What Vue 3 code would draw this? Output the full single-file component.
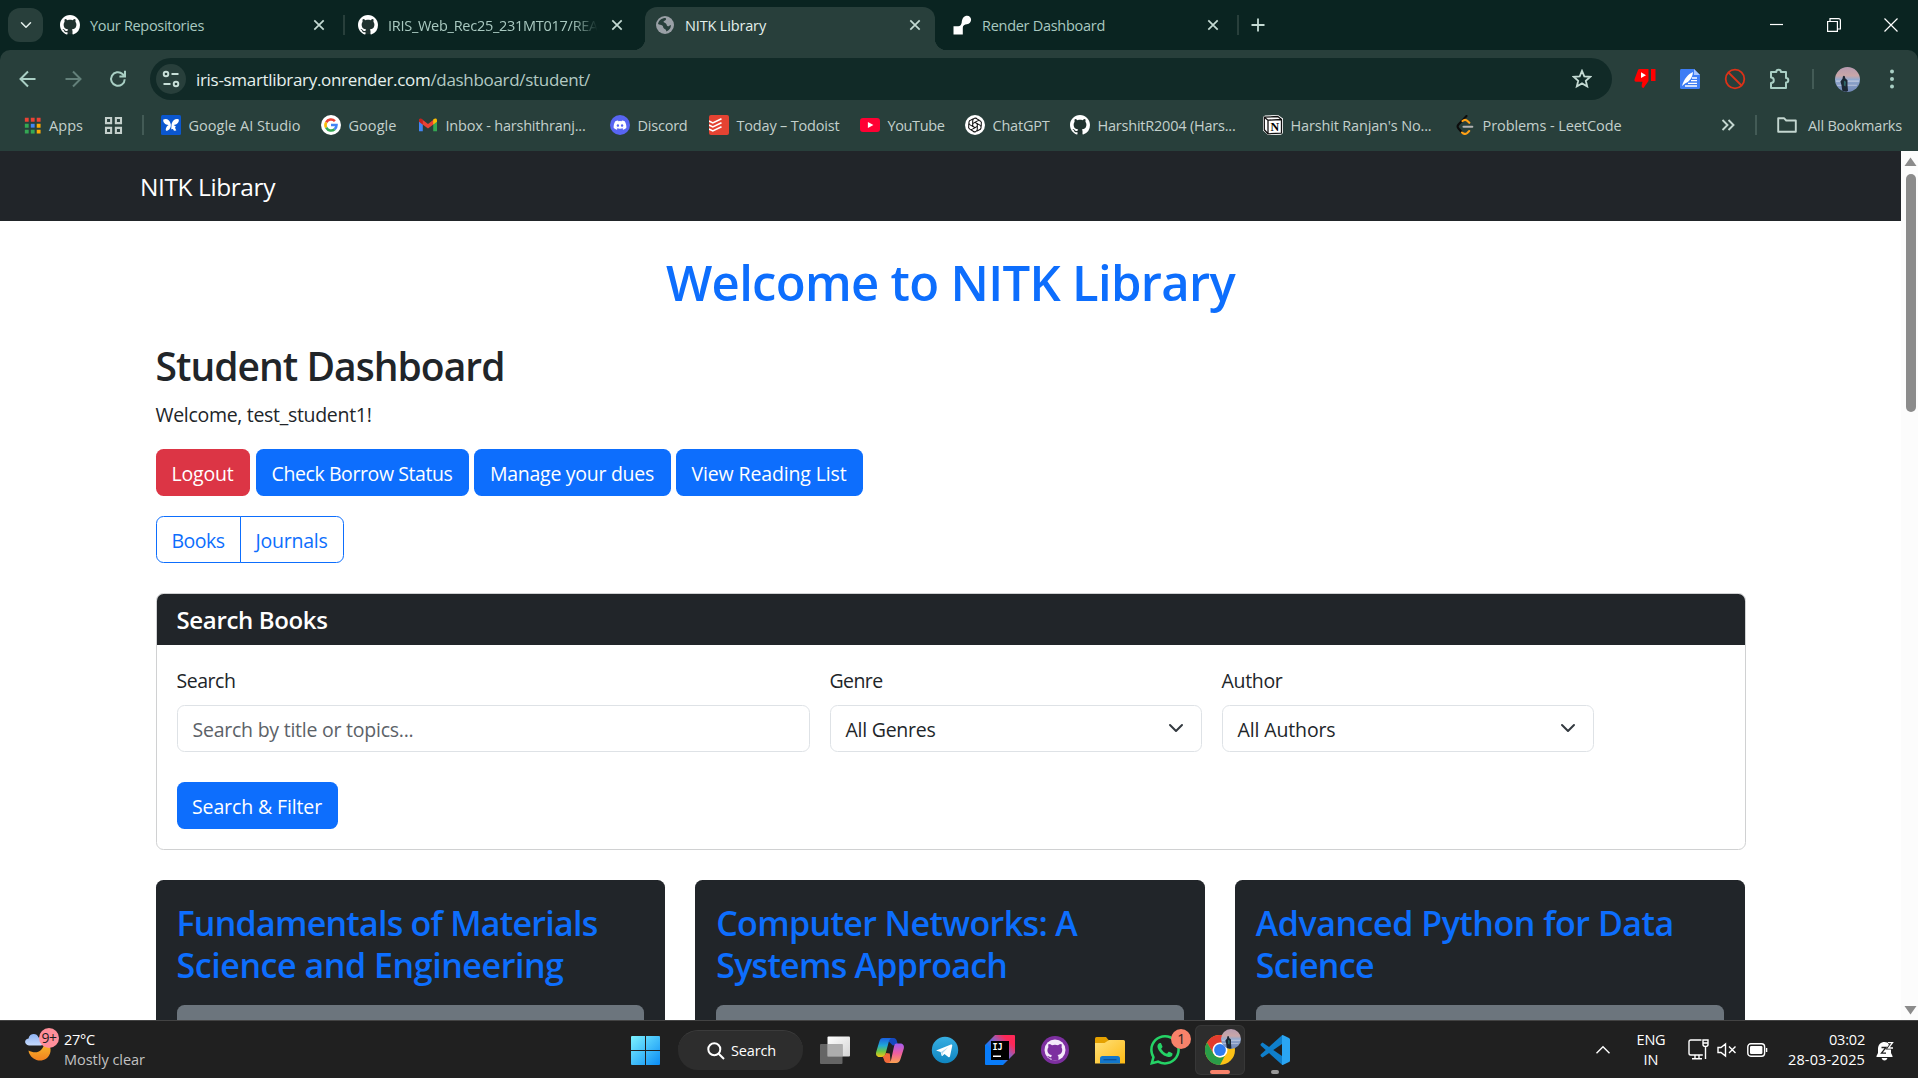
<script setup>
const tabs = [
  { icon: 'github', title: 'Your Repositories', fit: 114, sep: true },
  { icon: 'github', title: 'IRIS_Web_Rec25_231MT017/REA', fit: 210, fade: true },
  { icon: 'globe', title: 'NITK Library', fit: 81, active: true },
  { icon: 'render', title: 'Render Dashboard', fit: 123, sep: true },
]

// slot: distance from one bookmark's icon to the next one's
const bookmarks = [
  { icon: 'aistudio', title: 'Google AI Studio', fit: 112, slot: 160 },
  { icon: 'google', title: 'Google', fit: 48, slot: 97 },
  { icon: 'gmail', title: 'Inbox - harshithranj...', fit: 140, slot: 192 },
  { icon: 'discord', title: 'Discord', fit: 50, slot: 99 },
  { icon: 'todoist', title: 'Today – Todoist', fit: 103, slot: 151 },
  { icon: 'youtube', title: 'YouTube', fit: 57, slot: 105 },
  { icon: 'openai', title: 'ChatGPT', fit: 57, slot: 105 },
  { icon: 'github', title: 'HarshitR2004 (Hars...', fit: 138, slot: 193 },
  { icon: 'notion', title: "Harshit Ranjan's No...", fit: 141, slot: 192 },
  { icon: 'leetcode', title: 'Problems - LeetCode', fit: 139, slot: 180 },
]

const actions = [
  { label: 'Logout', width: 94, fit: 62, danger: true },
  { label: 'Check Borrow Status', width: 213, fit: 181 },
  { label: 'Manage your dues', width: 197, fit: 164 },
  { label: 'View Reading List', width: 187, fit: 155 },
]

const books = [
  [['Fundamentals of Materials', 421], ['Science and Engineering', 387]],
  [['Computer Networks: A', 361], ['Systems Approach', 291]],
  [['Advanced Python for Data', 418], ['Science', 118]],
]

// Tracks the text so that it fills the given width in pixels.
const vFit = {
  mounted(el, { value }) {
    const range = document.createRange()
    range.selectNodeContents(el)
    const natural = range.getBoundingClientRect().width
    el.style.letterSpacing = (value - natural) / el.textContent.length + 'px'
  },
}
</script>

<template>
  <svg class="defs" aria-hidden="true">
    <defs>
      <linearGradient id="gWin" x1="0" y1="0" x2="1" y2="1"><stop offset="0" stop-color="#7df3ff" /><stop offset="1" stop-color="#0a8cf5" /></linearGradient>
      <linearGradient id="gMoon" x1="0" y1="0" x2="0" y2="1"><stop offset="0" stop-color="#f9c22e" /><stop offset="1" stop-color="#f0801f" /></linearGradient>
      <linearGradient id="gCloud" x1="0" y1="0" x2="0" y2="1"><stop offset="0" stop-color="#8fb4f4" /><stop offset="1" stop-color="#c5d9fb" /></linearGradient>
      <linearGradient id="gCop1" x1="0" y1="0" x2="0" y2="1"><stop offset="0" stop-color="#1a5fe0" /><stop offset=".4" stop-color="#20a8d8" /><stop offset=".7" stop-color="#6cc644" /><stop offset="1" stop-color="#f8c512" /></linearGradient>
      <linearGradient id="gCop2" x1="0" y1="0" x2="0" y2="1"><stop offset="0" stop-color="#a45cf0" /><stop offset=".5" stop-color="#ee5fa0" /><stop offset="1" stop-color="#fba250" /></linearGradient>
      <linearGradient id="gTg" x1="0" y1="0" x2="0" y2="1"><stop offset="0" stop-color="#37aee2" /><stop offset="1" stop-color="#0f85c0" /></linearGradient>
      <linearGradient id="gIj" x1="0" y1="1" x2="1" y2="0"><stop offset=".35" stop-color="#087cfa" /><stop offset=".6" stop-color="#9b5bb5" /><stop offset=".8" stop-color="#fe2857" /></linearGradient>
      <linearGradient id="gFolder" x1="0" y1="0" x2="1" y2="1"><stop offset="0" stop-color="#ffe17a" /><stop offset="1" stop-color="#fdb913" /></linearGradient>
      <linearGradient id="gTask" x1="0" y1="0" x2="1" y2="1"><stop offset="0" stop-color="#fff" /><stop offset="1" stop-color="#d4d4d4" /></linearGradient>
      <linearGradient id="gSky" x1="0" y1="0" x2="0" y2="1"><stop offset="0" stop-color="#b79bb0" /><stop offset=".35" stop-color="#c9a6a8" /><stop offset=".5" stop-color="#93a9cf" /><stop offset="1" stop-color="#6f86b4" /></linearGradient>
    </defs>

    <symbol id="github" viewBox="0 0 16 16"><circle cx="8" cy="8" r="7.4" fill="#20322f" /><path fill="#fff" d="M8 0C3.58 0 0 3.58 0 8c0 3.54 2.29 6.53 5.47 7.59.4.07.55-.17.55-.38 0-.19-.01-.82-.01-1.49-2.01.37-2.53-.49-2.69-.94-.09-.23-.48-.94-.82-1.13-.28-.15-.68-.52-.01-.53.63-.01 1.08.58 1.23.82.72 1.21 1.87.87 2.33.66.07-.52.28-.87.51-1.07-1.78-.2-3.64-.89-3.64-3.95 0-.87.31-1.59.82-2.15-.08-.2-.36-1.02.08-2.12 0 0 .67-.21 2.2.82.64-.18 1.32-.27 2-.27s1.36.09 2 .27c1.53-1.04 2.2-.82 2.2-.82.44 1.1.16 1.92.08 2.12.51.56.82 1.27.82 2.15 0 3.07-1.87 3.75-3.65 3.95.29.25.54.73.54 1.48 0 1.07-.01 1.93-.01 2.2 0 .21.15.46.55.38A8.01 8.01 0 0 0 16 8c0-4.42-3.58-8-8-8Z" /></symbol>
    <symbol id="globe" viewBox="0 0 20 20"><circle cx="10" cy="10" r="9" fill="#9aa0a6" /><path fill="#283f3b" d="M8.500 3.200c2.200-.3 3 .3 2.400 1.500-.5 1-2.100.8-2.300 1.900-.2 1.200 1.400 1 2.300 1.900 1.200 1.100.4 2.300 1.900 2.700 1.400.4 1.500-1 3-1.300.3 3-1.800 5.600-4.600 6.500.3-1.400-.7-2-1.900-2.700-1.500-.9-.7-2.200-2-3.200C6 9.500 4.600 9.800 3 9c.3-3 2.600-5.400 5.500-5.800z" /></symbol>
    <symbol id="render" viewBox="0 0 20 20"><path fill="#fff" d="M1.500 19.500v-8.300h4.700c2 0 3.200-1.600 3.500-3.700C10 3.500 12 .8 15.200.8c2.300 0 3.900 1.800 3.900 4s-1.700 4.400-4.200 4.400c-2.300 0-4.100 1.200-4.100 3.600v6.700z" /></symbol>
    <symbol id="apps" viewBox="0 0 20 20">
      <path fill="#ea4335" d="M1 1h4.500v4.500H1zM8 1h4.500v4.500H8zM15 1h4.500v4.500H15z" /><path fill="#34a853" d="M1 8h4.500v4.500H1zM1 15h4.500v4.500H1z" /><path fill="#4285f4" d="M8 8h4.500v4.500H8z" /><path fill="#34a853" d="M8 15h4.500v4.500H8z" /><path fill="#fbab05" d="M15 8h4.500v4.500H15zM15 15h4.500v4.500H15z" />
    </symbol>
    <symbol id="grid" viewBox="0 0 20 20"><path fill="none" stroke="#c3cfcb" stroke-width="2.200" d="M2.100 2.100h5.400v5.400H2.100zM12.500 2.100h5.400v5.400h-5.400zM2.100 12.500h5.400v5.400H2.100zM12.500 12.500h5.400v5.400h-5.400z" /></symbol>
    <symbol id="aistudio" viewBox="0 0 20 20"><rect width="20" height="20" rx="1.500" fill="#0b57d0" /><path fill="#fff" d="M9.800 9.200C8.500 4.500 5.500 3.300 2.300 4.600 1.800 7.800 4.500 10 7.600 9.900 5 11.500 4.300 14 5 15.800 8 16 9.600 13 9.800 11zM10.600 9C12 4.500 14.800 3.300 17.800 4.600 18.200 7.800 15.600 10 12.600 9.900l2.300 1.600-.9 1.300 1.300 2.600-2.300.4-1.100-1.800-1.700.2z" /></symbol>
    <symbol id="google" viewBox="0 0 20 20"><circle cx="10" cy="10" r="10" fill="#fff" /><g fill="none" stroke-width="2.600"><path stroke="#ea4335" d="M5.200 7.300A5.500 5.500 0 0 1 13.900 6.100" /><path stroke="#fbbc05" d="M5.200 12.700a5.500 5.500 0 0 1 0-5.400" /><path stroke="#34a853" d="M13.600 14.200a5.500 5.500 0 0 1-8.400-1.500" /><path stroke="#4285f4" d="M10 10h5.500a5.500 5.500 0 0 1-1.900 4.200" /></g></symbol>
    <symbol id="gmail" viewBox="0 0 20 20"><path fill="#4285f4" d="M1 6v10.200h3.800V9z" /><path fill="#34a853" d="M19 6v10.200h-3.800V9z" /><path fill="#ea4335" d="M1.200 4.200 4.800 5 10 9l5.200-4 3 .2L17 8.300l-7 5.200-7-5.200z" /><path fill="#c5221f" d="M1 5.200C1 3.300 3 3 4.800 4.500V9.500L1 6.700z" /><path fill="#fbbc04" d="M19 5.200c0-1.900-2-2.200-3.800-.7v5L19 6.700z" /></symbol>
    <symbol id="discord" viewBox="0 0 20 20"><circle cx="10" cy="10" r="10" fill="#5865f2" /><path fill="#fff" d="M14.700 6.200A10 10 0 0 0 12 5.400l-.4.8a9 9 0 0 0-3.200 0L8 5.400a10 10 0 0 0-2.700.8C3.800 8.500 3.500 10.800 3.700 13.100a9 9 0 0 0 3.200 1.600l.7-1.200-1-.5.2-.2a6.600 6.600 0 0 0 6.400 0l.2.200-1 .5.7 1.200a9 9 0 0 0 3.200-1.600c.3-2.700-.4-5-1.600-6.900zM7.900 11.800c-.7 0-1.200-.6-1.200-1.300s.5-1.300 1.200-1.300 1.200.6 1.200 1.300-.5 1.300-1.200 1.300zm4.200 0c-.7 0-1.200-.6-1.200-1.300s.5-1.300 1.200-1.300 1.200.6 1.200 1.300-.5 1.300-1.200 1.300z" /></symbol>
    <symbol id="todoist" viewBox="0 0 20 20"><rect width="20" height="20" rx="2" fill="#e44332" /><path fill="none" stroke="#fff" stroke-width="1.600" d="M0 6l3.800 1.900L12.500 3.700M0 10l3.800 1.900 8.700-4.200M0 14l3.800 1.900 8.700-4.200" /></symbol>
    <symbol id="youtube" viewBox="0 0 20 20"><rect y="3" width="20" height="14" rx="3" fill="#ff0033" /><path fill="#fff" d="m7.900 7 5.500 3-5.500 3z" /></symbol>
    <symbol id="openai" viewBox="0 0 20 20"><circle cx="10" cy="10" r="10" fill="#fff" /><g fill="none" stroke="#111" stroke-width="1.050"><path d="M10 7.400 7.700 8.700v-3a2.600 2.600 0 0 1 4.600-1.600l2 1.200" /><path transform="rotate(60 10 10)" d="M10 7.400 7.700 8.700v-3a2.600 2.600 0 0 1 4.600-1.600l2 1.200" /><path transform="rotate(120 10 10)" d="M10 7.400 7.700 8.700v-3a2.600 2.600 0 0 1 4.600-1.600l2 1.200" /><path transform="rotate(180 10 10)" d="M10 7.400 7.700 8.700v-3a2.600 2.600 0 0 1 4.600-1.600l2 1.200" /><path transform="rotate(240 10 10)" d="M10 7.400 7.700 8.700v-3a2.600 2.600 0 0 1 4.600-1.600l2 1.200" /><path transform="rotate(300 10 10)" d="M10 7.400 7.700 8.700v-3a2.600 2.600 0 0 1 4.600-1.600l2 1.200" /></g></symbol>
    <symbol id="leetcode" viewBox="0 0 20 20"><g fill="none" stroke-linecap="round" stroke-width="2.100"><path stroke="#0c0c0c" d="M11.500 1 3.500 9.500a3 3 0 0 0 0 4L7 17.500" /><path stroke="#ffa116" d="m7 17.500c1.700 1.700 4 1.600 5.500.2l1.700-1.700M7.500 6c1.700-1.500 3.500-1.600 5 0l1.800 1.800" /><path stroke="#b3b3b3" d="M8.500 11.800h8.800" /></g></symbol>
    <symbol id="folder" viewBox="0 0 20 20"><path fill="none" stroke="#c3d6d0" stroke-width="1.900" stroke-linejoin="round" d="M1.200 3.300h6l2 2.200h9.600v11.300H1.200z" /></symbol>
    <symbol id="cross" viewBox="0 0 12 12"><path fill="none" stroke="currentColor" stroke-width="1.700" d="m1.300 1.300 9.400 9.400M10.700 1.300l-9.400 9.400" /></symbol>
    <symbol id="avatar" viewBox="0 0 24 24"><circle cx="12" cy="12" r="12" fill="url(#gSky)" /><path fill="#dfe3ee" opacity=".6" d="M1 13h22v1.200H1zM2 17h19v1H2z" /><path fill="#1c2733" d="M7.600 9q.9-1.300 1.900 0l.3 1.700 2.200 2v4.500l.5 5.800-1.800.8-3.700-1-.8-5.500-1-3.500 2-2.500z" /><path fill="#2f6668" d="m8.500 13 2 1.200-.4 4.500-1.600-1z" /></symbol>
    <symbol id="chevron" viewBox="0 0 16 16"><path fill="none" stroke="currentColor" stroke-width="2" stroke-linecap="round" stroke-linejoin="round" d="m2 5 6 6 6-6" /></symbol>
  </svg>

  <div class="screen">
    <header class="browser">
      <div class="tabstrip">
        <button class="tab-search"><svg width="12" height="12"><use href="#chevron" /></svg></button>
        <div v-for="tab in tabs" :key="tab.title" class="tab" :class="{ active: tab.active, sep: tab.sep }">
          <svg class="tab-icon" width="20" height="20"><use :href="'#' + tab.icon" /></svg>
          <span class="tab-title" :class="{ fade: tab.fade }"><span v-fit="tab.fit">{{ tab.title }}</span></span>
          <svg class="tab-close" width="12" height="12"><use href="#cross" /></svg>
        </div>
        <svg class="new-tab" width="14" height="14" viewBox="0 0 14 14"><path d="M7 .5v13M.5 7h13" /></svg>
        <div class="window-controls">
          <svg width="14" height="14" viewBox="0 0 14 14"><path d="M0 6.500h13" /></svg>
          <svg width="14" height="14" viewBox="0 0 14 14"><path d="M.6 3.500h9.800v9.800H.6zM3 3.500V.6h8.500q1.900 0 1.900 1.900v8.500h-3" /></svg>
          <svg width="14" height="14" viewBox="0 0 14 14"><path d="m.5.5 13 13M13.500.5l-13 13" /></svg>
        </div>
      </div>

      <div class="toolbar">
        <svg class="nav-icon" width="20" height="20" viewBox="0 0 20 20"><path d="M17.500 10H3M10 2.500 2.500 10l7.500 7.500" /></svg>
        <svg class="nav-icon off" width="20" height="20" viewBox="0 0 20 20"><path d="M2.500 10H17M10 2.500l7.500 7.500-7.500 7.500" /></svg>
        <svg class="nav-icon" width="20" height="20" viewBox="0 0 20 20"><path d="M16.700 10.200A6.800 6.800 0 1 1 14.500 5l2.300 2.200M17 1.800v5.600h-5.600" /></svg>
        <div class="omnibox">
          <span class="site-info"><svg width="18" height="18" viewBox="0 0 18 18"><path d="M9.500 4h7M1.500 14h7" /><circle cx="4" cy="4" r="2.300" /><circle cx="14" cy="14" r="2.300" /></svg></span>
          <span v-fit="394" class="url">iris-smartlibrary.onrender.com<i>/dashboard/student/</i></span>
          <svg class="star" width="20" height="20" viewBox="0 0 20 20"><path d="m10 1.800 2.300 5.500 6 .5-4.500 3.900 1.400 5.800L10 14.400l-5.200 3.100 1.400-5.800L1.700 7.800l6-.5z" /></svg>
        </div>
        <div class="extensions">
          <svg width="22" height="20" viewBox="0 0 22 20"><path fill="#f00" d="M5.500 0h9v12l-5 7c-2.500-.5-2-2.500-1-6.200H2.200C.3 12.800.2 11 .8 9.500L4 1q.4-1 1.500-1zM17 0h4.500v12H17z" /><path fill="#fff" d="m7 3.300 5 2.900-5 2.900z" /></svg>
          <svg width="22" height="20" viewBox="0 0 22 20"><path fill="#3d7df5" d="M2 0h13l6 6v12.500q0 1.500-1.500 1.500h-17Q1 20 1 18.500V1.500Q1 0 2 0z" /><path fill="#a9c7ff" d="m15 0 6 6h-6z" /><path fill="#fff" d="M3 17C5 10 9 5 14 3c-.5 6-4 10-8 11.500z" /><path fill="none" stroke="#fff" stroke-width="1.300" d="M13 9h5M12 11.700h6M9 14.400h9M6 17h12" /></svg>
          <svg width="22" height="22" viewBox="0 0 22 22"><g fill="none" stroke="#dc3218" stroke-width="1.800"><circle cx="11" cy="11" r="9.300" /><path d="m4.500 4.500 13 13" /></g></svg>
          <svg width="22" height="22" viewBox="0 0 22 22"><path fill="none" stroke="#a9cfc4" stroke-width="2" stroke-linejoin="round" d="M2 4h5.300a2.300 2.300 0 0 1 4.600 0H17v6a2.300 2.300 0 0 1 0 4.600V20H2v-5a2.700 2.700 0 0 0 0-5.600z" /></svg>
          <span class="bar"></span>
          <svg width="25" height="25"><use href="#avatar" /></svg>
          <svg class="dots" width="6" height="20" viewBox="0 0 6 20"><circle cx="3" cy="2.500" r="2" /><circle cx="3" cy="10" r="2" /><circle cx="3" cy="17.500" r="2" /></svg>
        </div>
      </div>

      <div class="bookmarks">
        <svg width="17" height="17"><use href="#apps" /></svg>
        <span v-fit="34" class="apps-label">Apps</span>
        <svg class="grid-icon" width="19" height="19"><use href="#grid" /></svg>
        <span class="bar"></span>
        <div class="bookmark-list">
          <div v-for="b in bookmarks" :key="b.title" class="bookmark" :style="{ width: b.slot + 'px' }">
            <svg v-if="b.icon === 'notion'" width="20" height="20" viewBox="0 0 20 20"><path fill="#fff" d="M0 2 2 .5 15 0l5 3.500V18l-2 1.800L5 20l-5-4.500z" /><path fill="#fff" stroke="#111" stroke-width="1.300" stroke-linejoin="round" d="M5 5.200 18.500 4.500v13.600L5 18.800zM5 5.200 1.300 2.200 14.800 1.500l3.700 3M1.300 2.200v12.500L5 18.800" /><text x="11.800" y="16" text-anchor="middle" font-family="Liberation Serif, serif" font-weight="700" font-size="12">N</text></svg>
            <svg v-else width="20" height="20"><use :href="'#' + b.icon" /></svg>
            <span v-fit="b.fit">{{ b.title }}</span>
          </div>
        </div>
        <div class="bookmark-end">
          <svg width="14" height="12" viewBox="0 0 14 12"><path d="m1.500 1 5 5-5 5M7.500 1l5 5-5 5" /></svg>
          <span class="bar"></span>
          <svg width="20" height="20"><use href="#folder" /></svg>
          <span v-fit="94" class="all">All Bookmarks</span>
        </div>
      </div>
    </header>

    <div class="viewport">
      <div class="page">
        <nav class="navbar"><span v-fit="135">NITK Library</span></nav>
        <main class="container">
          <h1><span v-fit="569">Welcome to NITK Library</span></h1>
          <h2><span v-fit="349">Student Dashboard</span></h2>
          <p><span v-fit="216">Welcome, test_student1!</span></p>
          <div class="actions">
            <button v-for="a in actions" :key="a.label" class="btn" :class="{ danger: a.danger }" :style="{ width: a.width + 'px' }"><span v-fit="a.fit">{{ a.label }}</span></button>
          </div>
          <div class="group">
            <button class="books"><span v-fit="53">Books</span></button>
            <button class="journals"><span v-fit="72">Journals</span></button>
          </div>

          <section class="search-card">
            <div class="card-header"><span v-fit="151">Search Books</span></div>
            <div class="card-body">
              <div class="fields">
                <div class="field wide">
                  <label><span v-fit="59">Search</span></label>
                  <div class="control muted"><span v-fit="221">Search by title or topics...</span></div>
                </div>
                <div class="field">
                  <label><span v-fit="53">Genre</span></label>
                  <div class="control"><span v-fit="90">All Genres</span><svg width="18" height="18"><use href="#chevron" /></svg></div>
                </div>
                <div class="field">
                  <label><span v-fit="61">Author</span></label>
                  <div class="control"><span v-fit="98">All Authors</span><svg width="18" height="18"><use href="#chevron" /></svg></div>
                </div>
              </div>
              <button class="btn filter"><span v-fit="130">Search &amp; Filter</span></button>
            </div>
          </section>

          <div class="book-row">
            <article v-for="(lines, i) in books" :key="i" class="book">
              <h3><span v-for="[text, width] in lines" :key="text" class="line"><span v-fit="width">{{ text }}</span></span></h3>
              <div class="cover"></div>
            </article>
          </div>
        </main>
      </div>
      <div class="scrollbar">
        <svg width="13" height="10" viewBox="0 0 13 10"><path d="M6.500.5 12.500 9H.5z" /></svg>
        <span class="thumb"></span>
        <svg width="13" height="10" viewBox="0 0 13 10"><path d="M6.500 9.500 12.500 1H.5z" /></svg>
      </div>
    </div>

    <footer class="taskbar">
      <div class="weather">
        <div class="weather-icon">
          <svg width="30" height="38" viewBox="0 0 30 38"><path fill="url(#gMoon)" d="M19 13c5 2 8 7 6 12.500-2 5.500-8 8.500-13.500 6.500C7.500 30.500 4 27 3.500 22.500 8 25 13 25 16 22c2.500-2.500 3.500-5.500 3-9z" /><path fill="url(#gCloud)" d="M4 17.500c-5-.5-5.200-6.500-.5-7C4.500 5 12 4.500 13.500 9.500c6-1 7.500 7 2.500 8z" /></svg>
          <span class="badge pink">9+</span>
        </div>
        <div class="weather-text"><span v-fit="31">27°C</span><span v-fit="81" class="dim">Mostly clear</span></div>
      </div>

      <div class="dock">
        <svg class="win" width="29" height="29" viewBox="0 0 29 29"><path fill="url(#gWin)" d="M1 0h13v14H0V1q0-1 1-1zM15 0h13q1 0 1 1v13H15zM0 15h14v14H1q-1 0-1-1zM15 15h14v13q0 1-1 1H15z" /></svg>
        <div class="search-pill">
          <svg width="18" height="18" viewBox="0 0 18 18"><circle cx="7.300" cy="7.300" r="6" /><path d="m11.700 11.700 5.300 5.300" /></svg>
          <span v-fit="45">Search</span>
        </div>
        <div class="slot"><svg width="30" height="28" viewBox="0 0 30 28"><rect x="7.500" y=".5" width="22.500" height="20" rx="1" fill="url(#gTask)" /><rect y="8" width="22.500" height="20" rx="1" fill="#777" opacity=".8" /><rect x="7.500" y="8" width="15" height="12.500" fill="#adadad" /></svg></div>
        <div class="slot"><svg width="30" height="28" viewBox="0 0 30 28"><path fill="#1649c0" d="M10 2h8.500c2 0 3 1.500 3.500 3.500l.8 3-5 1-3-3z" /><path fill="url(#gCop1)" d="M8 2h8.500c-1.500.5-2.300 2-2.800 4l-3.200 12c-.5 2-1.500 3-3.500 3H4.500C1.500 21 .5 18.500 1.200 16L4.500 5C5.200 3 6 2 8 2z" /><path fill="#f26a3a" d="M7.500 20.500c2 0 2.800-1.500 3.300-3.500l4 .5 1 9.500h-3c-2.500 0-3.500-1.500-4-4z" /><path fill="url(#gCop2)" d="M21.500 7.500H25c3 0 4.500 2 3.800 5L25.500 23c-.8 2.500-2 4-4.500 4h-7.500c1.500-.5 2.300-2 2.800-4L19 10.500c.5-2 1-3 2.500-3z" /></svg></div>
        <div class="slot"><svg width="28" height="28" viewBox="0 0 28 28"><circle cx="14" cy="14" r="13.200" fill="url(#gTg)" /><path fill="#fff" d="M5.700 14.200 20 8.500c.9-.3 1.500.2 1.200 1.400L19 20.200c-.2 1-.9 1.200-1.700.7L13.500 18l-1.900 1.800c-.5.5-.9.200-1-.3l-1-3.500-3.800-1.200c-.7-.2-.6-.4-.1-.6z" /><path fill="#b5d9ee" d="m10 16 7.500-4.900-5.700 5.900-.4 2.300z" /></svg></div>
        <div class="slot"><svg width="30" height="30" viewBox="0 0 30 30"><path fill="url(#gIj)" d="M10 0h19q1 0 1 1v17L18 30H1q-1 0-1-1V10z" /><rect x="6" y="6" width="18" height="19" fill="#000" /><text x="7.500" y="15" fill="#fff" font-family="DejaVu Sans Mono, monospace" font-weight="700" font-size="8.500">IJ</text><path fill="#fff" d="M8 20.500h8V22H8z" /></svg></div>
        <div class="slot"><svg width="28" height="28" viewBox="0 0 28 28"><circle cx="14" cy="14" r="14" fill="#7d2fa0" /><circle cx="14" cy="14" r="10.500" fill="#f4e9fa" /><path fill="#7d2fa0" d="M7.500 8q2 0 3.500 1.200 3-.7 6 0Q18.500 8 20.500 8q.5 1.800 0 3.200c2 4-.3 7.300-4 7.800q1 1 1 2.300v3.200h-7v-2c-3 .5-3-1.800-4.500-2.500 2-.2 2.200 1.200 3.700 1.200q.8 0 1-2.200c-3.700-.5-5.500-4.200-3.300-7.800q-.4-1.700.1-3.200z" /></svg></div>
        <div class="slot"><svg width="30" height="28" viewBox="0 0 30 28"><path fill="#e5a100" d="M1.500 1H11l3 3.500v6H0V2.500Q0 1 1.500 1z" /><path fill="url(#gFolder)" d="M0 7h9.500L14 4h14.500Q30 4 30 5.500V27.500H0z" /><path fill="#1277cc" d="M5 27.500V22.500Q5 20 7.500 20h15q2.500 0 2.500 2.500v5z" /><path stroke="#0a4f96" stroke-width="1.200" d="M8.500 23.700h13" /></svg></div>
        <div class="slot"><svg width="30" height="30" viewBox="0 0 16 16"><path fill="#25d366" d="M13.601 2.326A7.850 7.850 0 0 0 7.994 0C3.627 0 .068 3.558.064 7.926c0 1.399.366 2.760 1.057 3.965L0 16l4.204-1.102a7.900 7.900 0 0 0 3.790.965h.004c4.368 0 7.926-3.558 7.930-7.930A7.900 7.900 0 0 0 13.600 2.326zM7.994 14.521a6.600 6.600 0 0 1-3.356-.920l-.240-.144-2.494.654.666-2.433-.156-.251a6.560 6.560 0 0 1-1.007-3.505c0-3.626 2.957-6.584 6.591-6.584a6.560 6.560 0 0 1 4.660 1.931 6.560 6.560 0 0 1 1.928 4.660c-.004 3.639-2.961 6.592-6.592 6.592m3.615-4.934c-.197-.099-1.170-.578-1.353-.646-.182-.065-.315-.099-.445.099-.133.197-.513.646-.627.775-.114.133-.232.148-.430.050-.197-.100-.836-.308-1.592-.985-.590-.525-.985-1.175-1.103-1.372-.114-.198-.011-.304.088-.403.087-.088.197-.232.296-.346.100-.114.133-.198.198-.330.065-.134.034-.248-.015-.347-.050-.099-.445-1.076-.612-1.470-.160-.389-.323-.335-.445-.340-.114-.007-.247-.007-.380-.007a.730.730 0 0 0-.529.247c-.182.198-.691.677-.691 1.654s.710 1.916.810 2.049c.098.133 1.394 2.132 3.383 2.992.470.205.840.326 1.129.418.475.152.904.129 1.246.080.380-.058 1.171-.480 1.338-.943.164-.464.164-.860.114-.943-.049-.084-.182-.133-.380-.232" /></svg><span class="badge coral">1</span></div>
        <div class="slot running">
          <svg width="30" height="30" viewBox="0 0 30 30"><circle cx="15" cy="15" r="15" fill="#fbc116" /><path fill="#e33b2e" d="M2 7.500A15 15 0 0 1 28 7.500H15L8.500 18.800z" /><path fill="#2a9d48" d="M2 7.500 8.500 18.800A7.500 7.500 0 0 0 15 22.500c2 0 3.800-.7 5-2L15 30A15 15 0 0 1 2 7.500z" /><circle cx="15" cy="15" r="7.500" fill="#fff" /><circle cx="15" cy="15" r="5.900" fill="#2f7cf0" /></svg>
          <svg class="mini-avatar" width="20" height="20"><use href="#avatar" /></svg>
          <span class="indicator wide"></span>
        </div>
        <div class="slot"><svg width="30" height="30" viewBox="0 0 30 30"><path fill="#0f7fcb" d="M2.500 7.500 1 8.800q-1 1 0 2L22 29.700V21z" /><path fill="#0f7fcb" d="m2.500 22.500-1.500-1.300q-1-1 0-2L22 .3V9z" /><path fill="#2aa5f2" d="M22 .3q.5-.5 1.300-.1l5.700 2.700q1 .6 1 1.600v21q0 1-1 1.600l-5.700 2.700q-.8.4-1.300-.1z" /></svg><span class="indicator"></span></div>
      </div>

      <div class="tray">
        <svg class="up" width="16" height="10" viewBox="0 0 16 10"><path d="m1.500 8.300 6.500-6.500 6.500 6.500" /></svg>
        <div class="lang"><span v-fit="29">ENG</span><span v-fit="15">IN</span></div>
        <svg class="net" width="21" height="21" viewBox="0 0 21 21"><path d="M13.500 1H2.800Q1 1 1 2.800v11.400Q1 16 2.800 16h12M7 16v3M11 16v3M4 19.800h10M15 1h5v4.500q0 2-2.500 2t-2.500-2zM17.500 7.500V20M15 4h5" /></svg>
        <svg class="vol" width="20" height="16" viewBox="0 0 20 16"><path d="M1 5.500v5h3L8.500 14V2L4 5.500zM12 4.500l6.500 6.500M18.500 4.500 12 11" /></svg>
        <svg class="bat" width="21" height="14" viewBox="0 0 21 14"><rect x=".8" y=".8" width="16.800" height="12.400" rx="3" /><rect class="fill" x="3" y="3" width="12.400" height="8" rx="1.200" /><path d="M19.600 5v4" /></svg>
        <div class="clock"><span v-fit="36">03:02</span><span v-fit="77">28-03-2025</span></div>
        <svg class="bell" width="18" height="20" viewBox="0 0 18 20"><path fill="#fff" d="M2 8C2 3.500 5 1 8.500 1q3 0 5 2L15 8v4l1.500 3v1h-16v-1L2 12zM5.500 17h6q-1 2.500-3 2.500t-3-2.500z" /><path fill="none" stroke="#202020" stroke-width="1.300" d="M5.500 6.500H10l-4.500 5.700H10" /><path fill="none" stroke="#202020" stroke-width="3" d="M12 1.700h4.500L12.500 7H17" /><path fill="none" stroke="#fff" stroke-width="1.300" d="M12 1.700h4.500L12.500 7H17" /></svg>
      </div>
    </footer>
  </div>
</template>

<style>
html, body { margin: 0; background: #fff; overflow: hidden; }
</style>

<style scoped>
* { box-sizing: border-box; }
.defs { position: absolute; width: 0; height: 0; }
svg { display: block; flex: none; }
button { font: inherit; padding: 0; border: 0; white-space: nowrap; }
.screen { width: 1918px; height: 1078px; display: flex; flex-direction: column; overflow: hidden; font-family: "Open Sans", "Noto Sans", sans-serif; font-size: 20px; color: #212529; background: #fff; white-space: nowrap; }

.browser { height: 151px; flex: none; background: #0a2421; font-size: 14.500px; color: #a9c9c0; }
.tabstrip { height: 50px; display: flex; align-items: stretch; }
.tab-search { width: 35px; height: 34px; margin: 8px 6px 0 8px; border-radius: 12px; background: #283f3b; color: #e4f0ec; display: flex; align-items: center; justify-content: center; }
.tab { position: relative; width: 290px; margin: 7px 8px 0 0; padding: 0 14px 0 11px; display: flex; align-items: center; }
.tab-icon { margin-top: -7px; }
.tab-title { flex: 1; margin: -7px 0 0 10px; }
.tab-title.fade { mask-image: linear-gradient(90deg, #000 86%, transparent 98%); margin-right: 9px; }
.tab-close { margin-top: -7px; color: #c4dad3; }
.tab.active { background: #283f3b; border-radius: 12px 12px 0 0; color: #e4f0ec; padding-left: 10px; }
.tab.active::before, .tab.active::after { content: ""; position: absolute; bottom: 0; width: 12px; height: 12px; }
.tab.active::before { left: -12px; background: radial-gradient(circle at 0 0, transparent 12px, #283f3b 12.500px); }
.tab.active::after { right: -12px; background: radial-gradient(circle at 100% 0, transparent 12px, #283f3b 12.500px); }
.tab.active + .tab { padding-left: 9px; }
.tab.sep::after { content: ""; position: absolute; right: -6px; top: 8px; width: 2px; height: 20px; background: #283f3b; }
.new-tab { margin: 18px 0 0 10px; fill: none; stroke: #c4dad3; stroke-width: 1.800; }
.window-controls { margin: 18px 20px 0 auto; display: flex; gap: 43px; }
.window-controls svg { fill: none; stroke: #fff; stroke-width: 1.200; }

.toolbar { height: 58px; padding: 0 23px 0 18px; display: flex; align-items: center; background: #283f3b; border-radius: 10px 10px 0 0; }
.nav-icon { margin-right: 25px; fill: none; stroke: #a9cfc4; stroke-width: 2; }
.nav-icon.off { stroke: #63807a; }
.omnibox { width: 1462px; height: 42px; margin-left: -3px; padding: 0 20px 0 6px; border-radius: 21px; background: #112a27; display: flex; align-items: center; }
.site-info { width: 30px; height: 30px; border-radius: 50%; background: #283f3b; display: flex; align-items: center; justify-content: center; }
.site-info svg { fill: none; stroke: #c8dfd8; stroke-width: 1.900; }
.url { margin-left: 10px; font-size: 17px; color: #e6f1ee; }
.url i { font-style: normal; color: #b3c9c3; }
.star { margin-left: auto; fill: none; stroke: #c4dad3; stroke-width: 1.800; }
.extensions { flex: 1; margin-left: 22px; display: flex; align-items: center; }
.extensions > * { margin-right: 23px; }
.bar { width: 2px; height: 20px; background: #435b56; flex: none; }
.extensions > .bar { margin: 0 21px 0 -2px; }
.extensions > .dots { margin: 0 0 0 auto; fill: #a9cfc4; }

.bookmarks { height: 43px; padding: 0 16px 9px 24px; display: flex; align-items: center; background: #283f3b; color: #c3d0cc; }
.apps-label { margin-left: 8px; width: 34px; }
.grid-icon { margin: 0 19px 0 21px; }
.bookmark-list { display: flex; margin-left: 17px; }
.bookmark { display: flex; align-items: center; gap: 7.500px; }
.bookmark-end { margin-left: auto; display: flex; align-items: center; }
.bookmark-end > svg:first-child { fill: none; stroke: #c3d6d0; stroke-width: 1.900; margin-right: 20px; }
.bookmark-end .bar { margin-right: 20px; }
.all { margin-left: 11px; width: 94px; }

.viewport { height: 869px; display: flex; overflow: hidden; }
.page { width: 1901px; height: 869px; overflow: hidden; }
.navbar { height: 70px; padding: 0 0 0 140px; background: #212529; color: #fff; font-size: 24.500px; display: flex; align-items: center; }
.container { width: 1590px; margin: 0 auto; padding-top: 31px; }
h1, h2, h3, p { margin: 0; font-weight: 600; }
h1 { font-size: 49px; line-height: 60px; text-align: center; color: #0d6efd; }
h2 { font-size: 39px; line-height: 48px; margin-top: 30px; }
p { line-height: 30px; margin: 10px 0 19px; font-weight: 400; font-size: 19.500px; }
.actions { display: flex; gap: 5px; }
.btn { height: 47px; padding-top: 2px; border-radius: 7.500px; background: #0d6efd; color: #fff; font-size: 19.500px; }
.btn.danger { background: #dc3545; margin-right: 1px; }
.group { display: flex; margin: 20px 0 30px; }
.group button { height: 47px; padding-top: 2px; border: 1px solid #0d6efd; background: #fff; color: #0d6efd; font-size: 19.500px; }
.group .books { width: 85px; border-radius: 7.500px 0 0 7.500px; }
.group .journals { width: 104px; margin-left: -1px; border-radius: 0 7.500px 7.500px 0; }

.search-card { height: 257px; border: 1px solid #d0d1d2; border-radius: 7.500px; overflow: hidden; }
.card-header { height: 51px; padding: 0 20px; display: flex; align-items: center; background: #212529; color: #fff; font-weight: 600; font-size: 24px; }
.card-body { padding: 21px 20px 20px; }
.fields { display: flex; gap: 20px; }
.field { width: 372px; font-size: 19.500px; }
.field.wide { width: 633px; }
label { display: block; line-height: 30px; margin-bottom: 9px; }
.control { height: 47px; padding: 2px 15px 0; border: 1px solid #dee2e6; border-radius: 7.500px; display: flex; align-items: center; justify-content: space-between; }
.control svg { color: #343a40; margin: -3px 2px 0 0; width: 16px; height: 16px; }
.control.muted { color: #5c6268; }
.filter { display: block; width: 161px; margin-top: 30px; }

.book-row { display: flex; gap: 30px; margin-top: 30px; width: 1589px; }
.book { flex: 1; height: 300px; padding: 22px 21px 0; background: #212529; border-radius: 7.500px; }
h3 { font-size: 34px; color: #0d6efd; }
.line { display: block; line-height: 42px; }
.cover { height: 200px; margin-top: 19px; border-radius: 7.500px; background: #6c757d; }

.scrollbar { width: 17px; padding: 6px 0 5px 2px; background: #fcfcfc; display: flex; flex-direction: column; align-items: center; fill: #8b8b8b; }
.thumb { width: 10px; height: 238px; margin: 7px 0 auto; border-radius: 5px; background: #8b8b8b; }

.taskbar { height: 58px; display: flex; background: #202020; border-top: 1px solid #434343; color: #fff; font-size: 14.500px; }
.weather { width: 631px; padding-left: 25px; display: flex; }
.weather-icon { position: relative; width: 30px; margin: 7px 9px 0 0; }
.badge { position: absolute; border-radius: 50%; width: 20px; height: 20px; line-height: 20px; text-align: center; color: #1d1d1d; font-size: 14px; letter-spacing: -.5px; }
.pink { left: 14px; top: 0; background: #ff8f9a; }
.coral { background: #f7826a; }
.weather-text, .lang, .clock { display: flex; flex-direction: column; line-height: 20px; padding-top: 9px; }
.dim { color: #c2c2c2; }
.dock { display: flex; align-items: flex-start; }
.win { margin: 15px 18px 0 0; }
.search-pill { width: 125px; height: 40px; margin: 9px 7px 0 0; padding-left: 29px; display: flex; align-items: center; gap: 6px; border-radius: 20px; background: #2d2d2d; border-top: 1px solid #3b3b3b; }
.search-pill svg { fill: none; stroke: #fff; stroke-width: 2; }
.slot { position: relative; width: 50px; height: 50px; margin: 4px 5px 0 0; display: flex; align-items: center; justify-content: center; }
.slot .badge { top: 4px; left: 31px; }
.running { background: #2d2d2d; border-radius: 6px; box-shadow: inset 0 0 0 1px #373737; }
.mini-avatar { position: absolute; left: 26px; top: 4px; }
.indicator { position: absolute; bottom: 1px; left: 21px; width: 8px; height: 4px; border-radius: 2px; background: #9a9a9a; }
.indicator.wide { left: 15px; width: 20px; background: #f7826a; }
.tray { margin-left: auto; display: flex; align-items: flex-start; padding-right: 24px; }
.tray svg { fill: none; stroke: #fff; stroke-width: 1.400; }
.up { margin: 24px 23px 0 0; }
.lang { width: 34px; align-items: center; margin-right: 20px; }
.net { margin: 18px 8px 0 0; }
.vol { margin: 21px 10px 0 0; }
.bat { margin: 22px 20px 0 0; }
.bat .fill { fill: #fff; stroke: none; }
.clock { width: 77px; align-items: flex-end; margin-right: 11px; }
.tray .bell { margin-top: 20px; stroke: none; }
</style>
